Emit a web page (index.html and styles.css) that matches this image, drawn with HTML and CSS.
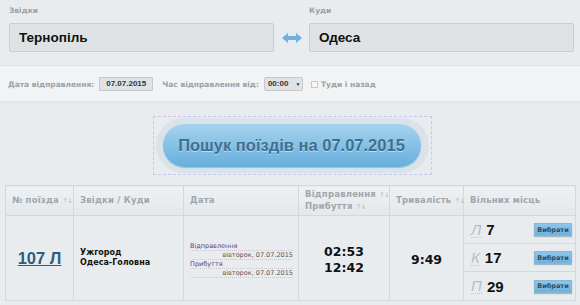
FILE: index.html
```html
<!DOCTYPE html>
<html lang="uk">
<head>
    <meta charset="UTF-8">
    <title>Пошук поїздів</title>
    <link rel="stylesheet" href="styles.css">
</head>
<body>
    <div class="route">
        <div class="field">
            <div class="label">Звідки</div>
            <div class="city">Тернопіль</div>
        </div>
        <div class="swap">
            <svg width="20" height="10" viewBox="0 0 20 10">
                <path d="M0 5 L6 0 L6 3 L14 3 L14 0 L20 5 L14 10 L14 7 L6 7 L6 10 Z" fill="#6cb2df"/>
            </svg>
        </div>
        <div class="field">
            <div class="label">Куди</div>
            <div class="city">Одеса</div>
        </div>
    </div>

    <div class="options">
        <span class="opt-label">Дата відправлення:</span>
        <span class="date-box">07.07.2015</span>
        <span class="opt-label">Час відправлення від:</span>
        <span class="select">00:00 <span class="caret">▼</span></span>
        <span class="check"></span>
        <span class="opt-label">Туди і назад</span>
    </div>

    <div class="search">
        <div class="search-frame">
            <div class="halo">
                <button class="search-btn">Пошук поїздів на 07.07.2015</button>
            </div>
        </div>
    </div>

    <table class="trains">
        <tr>
            <th class="c-num">№ поїзда <span class="sort">↑↓</span></th>
            <th class="c-route">Звідки / Куди</th>
            <th class="c-date">Дата</th>
            <th class="c-time">Відправлення <span class="sort">↑↓</span><br>Прибуття <span class="sort">↑↓</span></th>
            <th class="c-dur">Тривалість <span class="sort">↑↓</span></th>
            <th class="c-seats">Вільних місць</th>
        </tr>
        <tr>
            <td class="num"><a href="#">107 Л</a></td>
            <td class="stations">Ужгород<br>Одеса-Головна</td>
            <td class="dates">
                <div class="d-label">Відправлення</div>
                <div class="d-value">вівторок, 07.07.2015</div>
                <div class="d-label">Прибуття</div>
                <div class="d-value">вівторок, 07.07.2015</div>
            </td>
            <td class="times">02:53<br>12:42</td>
            <td class="dur">9:49</td>
            <td class="seats">
                <div class="seat-row"><span class="type">Л</span><span class="count">7</span><button class="pick">Вибрати</button></div>
                <div class="seat-row"><span class="type">К</span><span class="count">17</span><button class="pick">Вибрати</button></div>
                <div class="seat-row"><span class="type">П</span><span class="count">29</span><button class="pick">Вибрати</button></div>
            </td>
        </tr>
    </table>
</body>
</html>
```

FILE: styles.css
```css
*{
    margin: 0;
    padding: 0;
    box-sizing: border-box;
}

body{
    background-color: #e9ecef;
    font-family: "DejaVu Sans", Verdana, sans-serif;
    width: 580px;
    height: 305px;
    overflow: hidden;
}

/* ---------- звідки / куди ---------- */

.route{
    display: flex;
    align-items: flex-end;
    padding: 6px 6px 13px 9px;
    height: 66px;
    border-bottom: 1px solid #dfe2e5;
}

.field{
    flex: 1;
}

.label{
    font-size: 7.5px;
    font-weight: bold;
    color: #9ba1a6;
    height: 17px;
}

.city{
    height: 29px;
    background-color: #dfe2e5;
    border: 1px solid #c9cdd1;
    border-radius: 2px;
    font-family: "Liberation Sans", Arial, sans-serif;
    font-weight: bold;
    font-size: 13.5px;
    color: #111;
    padding: 6px 9px;
}

.swap{
    width: 35px;
    height: 29px;
    display: flex;
    align-items: center;
    justify-content: center;
}

/* ---------- параметри ---------- */

.options{
    display: flex;
    align-items: center;
    height: 37px;
    padding: 1px 0 0 8px;
    background-color: #f2f3f5;
    border-bottom: 2px solid #e2e5e8;
}

.opt-label{
    font-size: 7.5px;
    font-weight: bold;
    color: #9ba1a6;
}

.date-box{
    margin: 0 9px 0 5px;
    width: 54px;
    height: 14px;
    background-color: #dfe3e6;
    border: 1px solid #c6cacd;
    font-family: "Liberation Sans", Arial, sans-serif;
    font-size: 8px;
    font-weight: bold;
    color: #333;
    text-align: center;
    line-height: 12px;
}

.select{
    margin: 0 8px 0 5px;
    width: 39px;
    height: 14px;
    background-color: #dfe3e6;
    border: 1px solid #c6cacd;
    border-radius: 2px;
    font-family: "Liberation Sans", Arial, sans-serif;
    font-size: 8px;
    font-weight: bold;
    color: #333;
    line-height: 12px;
    padding-left: 3px;
}

.caret{
    font-size: 5px;
    margin-left: 5px;
}

.check{
    width: 7px;
    height: 7px;
    border: 1px solid #c5c9cc;
    background-color: #f7f7f7;
    margin-right: 3px;
}

/* ---------- кнопка пошуку ---------- */

.search{
    display: flex;
    justify-content: center;
    padding: 13px 0 10px 4px;
}

.search-frame{
    width: 279px;
    height: 59px;
    border: 1px dashed #c9c4f2;
    padding: 1px 2px;
}

.halo{
    height: 55px;
    border-radius: 28px;
    background-color: #d9e3e9;
    padding: 6px 7px;
}

.search-btn{
    width: 258px;
    height: 43px;
    padding: 0;
    white-space: nowrap;
    border: none;
    border-radius: 22px;
    background: linear-gradient(#a6d2ee, #66afdc);
    box-shadow: 0 1px 1px #9fbfd4;
    font-family: "Liberation Sans", Arial, sans-serif;
    font-weight: bold;
    font-size: 16.5px;
    color: #3e6f8f;
    text-shadow: 0 1px 0 #b7dbf2;
}

/* ---------- таблиця ---------- */

.trains{
    margin: 0 5px;
    width: 570px;
    border-collapse: collapse;
    table-layout: fixed;
}

.trains th,
.trains td{
    border: 1px solid #d3d8dc;
}

.trains th{
    height: 30px;
    background: linear-gradient(#eef1f3, #e4e8eb);
    font-size: 8.5px;
    letter-spacing: 0.2px;
    font-weight: bold;
    color: #9fa6ac;
    text-align: left;
    padding: 0 6px;
    line-height: 11px;
    white-space: nowrap;
}

.sort{
    font-size: 7px;
    letter-spacing: -1px;
    color: #b8bdc1;
    font-weight: normal;
}

.c-num{ width: 68px; }
.c-route{ width: 110px; }
.c-date{ width: 115px; }
.c-time{ width: 91px; }
.c-dur{ width: 74px; }
.c-seats{ width: 112px; }

.trains td{
    height: 85px;
    vertical-align: middle;
}

.num{
    text-align: center;
}

.num a{
    font-family: "Liberation Sans", Arial, sans-serif;
    font-size: 16.5px;
    font-weight: bold;
    color: #2e5d7d;
}

.stations{
    padding-left: 6px;
    font-size: 8px;
    font-weight: bold;
    color: #111;
    line-height: 10px;
}

.dates{
    padding: 4px 5px 0 6px;
    font-size: 6.5px;
    line-height: 8px;
}

.d-label{
    color: #5e3f70;
    border-bottom: 1px dotted #d0c8d0;
}

.d-value{
    text-align: right;
    color: #555;
    border-bottom: 1px dotted #c8ccd0;
}

.times{
    padding-top: 3px;
    text-align: center;
    font-size: 12.5px;
    font-weight: bold;
    color: #111;
    line-height: 16px;
}

.dur{
    padding-top: 2px;
    text-align: center;
    font-size: 12.5px;
    font-weight: bold;
    color: #111;
}

.trains td.seats{
    padding: 0;
}

.seat-row{
    display: flex;
    align-items: center;
    height: 28px;
    padding: 0 3px 0 7px;
    border-bottom: 1px solid #d3d8dc;
}

.seat-row:last-child{
    border-bottom: none;
}

.type{
    font-family: "Liberation Sans", Arial, sans-serif;
    font-style: italic;
    font-size: 15px;
    color: #b9bec2;
    border-bottom: 1px dotted #c2c6ca;
    line-height: 15px;
}

.count{
    margin-left: 5px;
    flex: 1;
    font-family: "Liberation Sans", Arial, sans-serif;
    font-size: 15px;
    font-weight: bold;
    color: #111;
}

.pick{
    width: 38px;
    height: 13px;
    padding: 0;
    background: linear-gradient(#8cc6ea, #6fb1dd);
    border: 1px solid #8ab6d2;
    box-shadow: 0 1px 1px #a6b6c1;
    font-family: "DejaVu Sans", Verdana, sans-serif;
    font-size: 6.5px;
    font-weight: bold;
    color: #2b4d66;
}
```
